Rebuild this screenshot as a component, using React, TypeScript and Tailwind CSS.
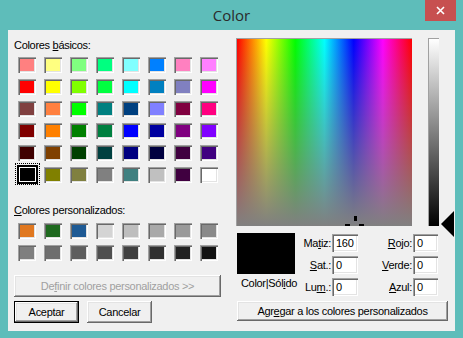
import React from "react";

const basic = [
  ["#FF8080", "#FFFF80", "#80FF80", "#00FF80", "#80FFFF", "#0080FF", "#FF80C0", "#FF80FF"],
  ["#FF0000", "#FFFF00", "#80FF00", "#00FF40", "#00FFFF", "#0080C0", "#8080C0", "#FF00FF"],
  ["#804040", "#FF8040", "#00FF00", "#008080", "#004080", "#8080FF", "#800040", "#FF0080"],
  ["#800000", "#FF8000", "#008000", "#008040", "#0000FF", "#0000A0", "#800080", "#8000FF"],
  ["#400000", "#804000", "#004000", "#004040", "#000080", "#000040", "#400040", "#400080"],
  ["#000000", "#808000", "#808040", "#808080", "#408080", "#C0C0C0", "#400040", "#FFFFFF"],
];

const custom = [
  ["#E07820", "#1F6A1F", "#1E5A94", "#D4D4D4", "#BEBEBE", "#A9A9A9", "#9A9A9A", "#8A8A8A"],
  ["#7F7F7F", "#6E6E6E", "#5E5E5E", "#4F4F4F", "#404040", "#303030", "#222222", "#111111"],
];

const sunken =
  "shadow-[inset_1px_1px_0_#a0a0a0,inset_2px_2px_0_#696969,inset_-1px_-1px_0_#ffffff,inset_-2px_-2px_0_#e3e3e3]";
const raised =
  "shadow-[inset_-1px_-1px_0_#696969,inset_1px_1px_0_#ffffff,inset_-2px_-2px_0_#a0a0a0,inset_2px_2px_0_#e3e3e3]";

function Swatch({ color, selected }: { color: string; selected?: boolean }) {
  if (selected) {
    return (
      <div className="relative w-[18px] h-[16px]">
        <span className="absolute -left-[3px] -top-[4px] w-[25px] h-[22px] border border-dotted border-black" />
        <div className="absolute -left-[1px] -top-[2px] w-[21px] h-[19px] border-2 border-black bg-white p-[1px]">
          <div className="w-full h-full" style={{ backgroundColor: color }} />
        </div>
      </div>
    );
  }
  return (
    <div className={`w-[18px] h-[16px] p-[2px] ${sunken}`} style={{ backgroundColor: color }}>
      <div className="w-full h-full" style={{ backgroundColor: color }} />
    </div>
  );
}

function Field({ label, value, labelW, inputW }: { label: React.ReactNode; value: string; labelW: string; inputW: string }) {
  return (
    <div className="flex items-center h-[18px]">
      <div className={`${labelW} text-right pr-[1px] whitespace-nowrap`}>{label}</div>
      <div className={`${inputW} h-[18px] bg-white ${sunken} pl-[4px] leading-[18px]`}>{value}</div>
    </div>
  );
}

export default function App() {
  return (
    <div className="w-[463px] h-[338px] bg-[#5ebdba] flex flex-col font-['Liberation_Sans',Arial,sans-serif] text-[11px] tracking-[-0.3px] text-black overflow-hidden">
      <div className="h-[30px] grid grid-cols-[1fr_auto_1fr] tracking-normal">
        <div />
        <div className="pt-[5px] text-[15px] leading-[20px] text-[#2b2b2b] font-['Open_Sans',sans-serif]">Color</div>
        <div className="flex justify-end pr-[7px]">
          <div className="w-[31px] h-[21px] bg-[#c75050] flex items-center justify-center">
            <svg width="9" height="9" viewBox="0 0 9 9">
              <path d="M1 1L8 8M8 1L1 8" stroke="white" strokeWidth="1.6" />
            </svg>
          </div>
        </div>
      </div>
      <div className="mx-[8px] mb-[7px] flex-1 bg-[#f0f0f0] flex">
        {/* left column */}
        <div className="ml-[6px] w-[214px] flex flex-col">
          <div className="mt-[9px] h-[12px] leading-[12px]">
            Colores <u>b</u>ásicos:
          </div>
          <div className="mt-[6px] ml-[4px] grid grid-cols-[repeat(8,18px)] gap-x-[8px] gap-y-[6px]">
            {basic.map((row, r) =>
              row.map((c, i) => <Swatch key={`${r}-${i}`} color={c} selected={r === 5 && i === 0} />)
            )}
          </div>
          <div className="mt-[21px] h-[12px] leading-[12px]">
            <u>C</u>olores personalizados:
          </div>
          <div className="mt-[7px] ml-[4px] grid grid-cols-[repeat(8,18px)] gap-x-[8px] gap-y-[6px]">
            {custom.map((row, r) => row.map((c, i) => <Swatch key={`c${r}-${i}`} color={c} />))}
          </div>
          <div
            className={`mt-[14px] w-[207px] h-[22px] bg-[#f0f0f0] ${raised} flex items-center justify-center text-[#a0a0a0]`}
          >
            <span>
              De<u>f</u>inir colores personalizados &gt;&gt;
            </span>
          </div>
          <div className="mt-[4px] flex gap-[8px]">
            <div className="w-[65px] h-[22px] border border-black">
              <div className={`w-full h-full ${raised} flex items-center justify-center`}>Aceptar</div>
            </div>
            <div className={`w-[65px] h-[22px] ${raised} flex items-center justify-center`}>Cancelar</div>
          </div>
        </div>
        {/* right column */}
        <div className="ml-[8px] flex-1 flex flex-col">
          <div className="mt-[8px] flex">
            <div className="relative w-[176px] h-[188px] border-t border-l border-[#a0a0a0] bg-[linear-gradient(to_bottom,rgba(128,128,128,0),#808080),linear-gradient(to_right,#ff0000,#ffff00,#00ff00,#00ffff,#0000ff,#ff00ff,#ff0000)]">
              <span className="absolute left-[117px] top-[177px] w-[3px] h-[5px] bg-black" />
              <span className="absolute left-[108px] top-[185px] w-[5px] h-[2px] bg-black" />
              <span className="absolute left-[122px] top-[185px] w-[5px] h-[2px] bg-black" />
            </div>
            <div className="relative ml-[16px] w-[11px] h-[188px] border-t border-l border-[#a0a0a0] bg-[linear-gradient(to_bottom,#ffffff,#000000)]">
              <svg className="absolute left-[11px] top-[171px]" width="15" height="28" viewBox="0 0 15 28">
                <path d="M1 14L14 1V27Z" fill="black" />
              </svg>
            </div>
          </div>
          <div className="mt-[7px] h-[63px] flex">
            <div className="ml-[1px] w-[58px] flex flex-col items-center">
              <div className="w-[58px] h-[41px] bg-black" />
              <div className="mt-[3px] ml-[6px] whitespace-nowrap h-[12px] leading-[12px]">
                Color|Sól<u>i</u>do
              </div>
            </div>
            <div className="mt-[1px] flex flex-col gap-[4px]">
              <Field label={<>Ma<u>t</u>iz:</>} value="160" labelW="w-[37px]" inputW="w-[26px]" />
              <Field label={<><u>S</u>at.:</>} value="0" labelW="w-[37px]" inputW="w-[26px]" />
              <Field label={<>Lu<u>m</u>.:</>} value="0" labelW="w-[37px]" inputW="w-[26px]" />
            </div>
            <div className="mt-[1px] flex flex-col gap-[4px]">
              <Field label={<><u>R</u>ojo:</>} value="0" labelW="w-[55px]" inputW="w-[25px]" />
              <Field label={<><u>V</u>erde:</>} value="0" labelW="w-[55px]" inputW="w-[25px]" />
              <Field label={<><u>A</u>zul:</>} value="0" labelW="w-[55px]" inputW="w-[25px]" />
            </div>
          </div>
          <div className={`mt-[5px] ml-[1px] w-[211px] h-[20px] ${raised} flex items-center justify-center`}>
            <span>
              Agr<u>e</u>gar a los colores personalizados
            </span>
          </div>
        </div>
      </div>
    </div>
  );
}
